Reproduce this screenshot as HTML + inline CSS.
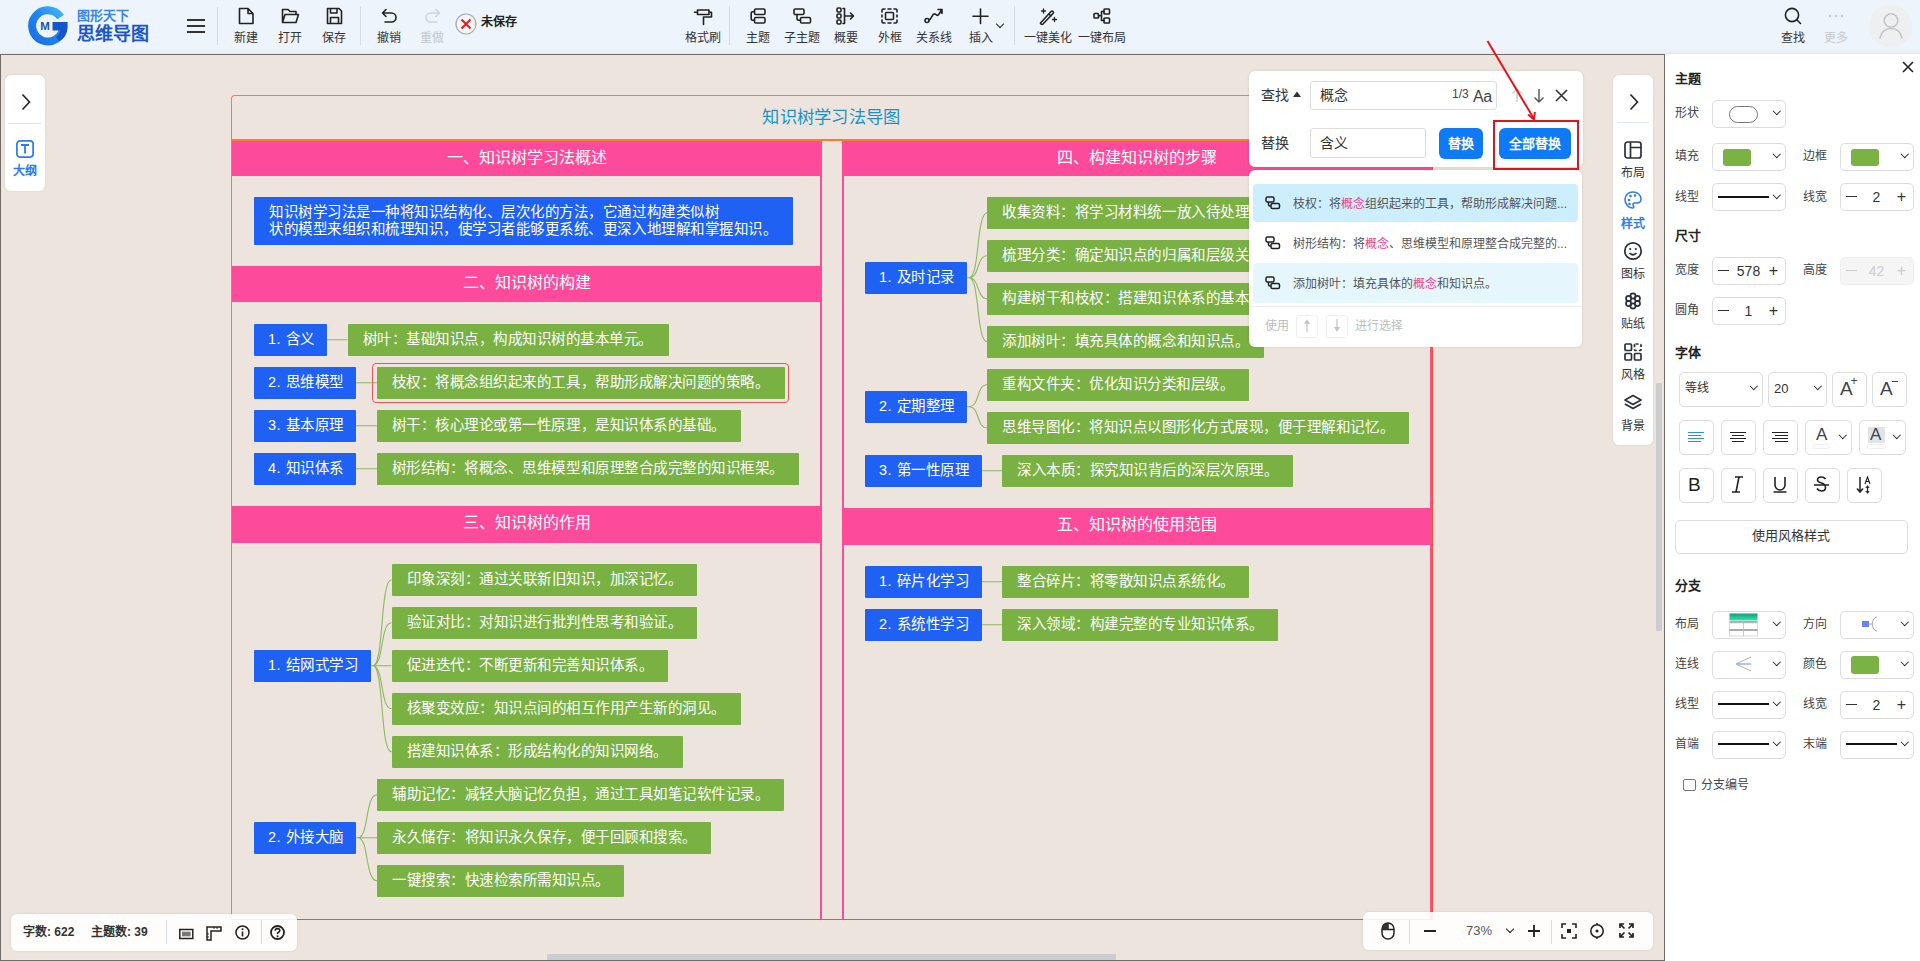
<!DOCTYPE html><html lang="zh-CN"><head><meta charset="utf-8"><style>
*{box-sizing:border-box;margin:0;padding:0}
html,body{width:1920px;height:961px;overflow:hidden;font-family:"Liberation Sans",sans-serif;background:#eef4fb;position:relative}
div,span{position:absolute;white-space:nowrap}
svg{position:absolute;overflow:visible}
.hdr{left:0;top:0;width:1920px;height:54px;background:#eef4fb}
.lab{font-size:12px;font-weight:500;color:#333;line-height:14px;text-align:center;width:60px;margin-left:-30px;top:30.5px}
.vsep{width:1px;background:#d5dce5}
.cv{left:0;top:54px;width:1665px;height:907px;background:#ede5dd;border:1px solid #716c67;overflow:hidden}
.sec{height:36px;background:#fd4a9b;color:#fff;font-size:16px;font-weight:500;text-align:center;line-height:34px}
.bn{height:31.5px;font-weight:500;background:#1f61f2;color:#fff;font-size:14.5px;letter-spacing:0.52px;line-height:31.5px;padding-left:14px;border-radius:1px}
.gn{height:31.5px;font-weight:500;background:#79b143;color:#fff;font-size:14.5px;letter-spacing:0.52px;line-height:31.5px;padding-left:15px;border-radius:1px}
.card{background:#fff;border-radius:6px}
.pl{font-size:12px;color:#444;line-height:14px}
.ph{font-size:13px;font-weight:bold;color:#222;line-height:16px}
.bx{border:1px solid #dcdcdc;border-radius:5px;background:#fff}
.chev{width:5.5px;height:5.5px;border-right:1.8px solid #222;border-bottom:1.8px solid #222;transform:rotate(45deg)}
</style></head><body>
<div class="hdr">
<svg style="left:28px;top:6px" width="40" height="40" viewBox="0 0 40 40">
<defs><linearGradient id="lg" x1="1" y1="0" x2="0" y2="1"><stop offset="0" stop-color="#40b8f8"/><stop offset="0.5" stop-color="#1f86ee"/><stop offset="1" stop-color="#1a6ee6"/></linearGradient></defs>
<circle cx="19.5" cy="20" r="11.5" fill="#f3f6fb"/>
<path d="M11 14 H28 M9 20 H30 M11 26 H28 M19.5 9 V31 M14 10 Q10 20 14 30 M25 10 Q29 20 25 30" stroke="#dfe6f0" stroke-width="0.7" fill="none"/>
<path d="M32.6 11 A15.6 15.6 0 1 0 35.3 21" fill="none" stroke="url(#lg)" stroke-width="8"/>
<path d="M24.5 16 H39.6 V21.5 Q39 31 31 35.5 L28 31 Q31.5 28 32 24.5 H24.5 Z" fill="#1556cc"/>
<text x="12.3" y="23.8" font-size="11.5" font-weight="bold" fill="#1a4fb8" font-family="Liberation Sans">M</text>
</svg>
<span style="left:77px;top:7.5px;font-size:13px;line-height:16px;color:#3a86e8;font-weight:bold">图形天下</span>
<span style="left:76.5px;top:22.5px;font-size:18px;line-height:22px;color:#1a56c9;font-weight:900">思维导图</span>
<div style="left:187px;top:19px;width:18px;height:2px;background:#333"></div><div style="left:187px;top:25px;width:18px;height:2px;background:#333"></div><div style="left:187px;top:31px;width:18px;height:2px;background:#333"></div>
<div class="vsep" style="left:217px;top:7px;height:38px"></div>
<span class="lab" style="left:246px;color:#333">新建</span>
<svg style="left:238px;top:7px" width="17" height="18"><path d="M1.5 1.5 H10 L15 6.5 V16.5 H1.5 Z M10 1.5 V6.5 H15" fill="none" stroke="#222" stroke-width="1.6" stroke-linejoin="round" stroke-linecap="round"/></svg>
<span class="lab" style="left:290px;color:#333">打开</span>
<svg style="left:281px;top:8px" width="19" height="16"><path d="M1.5 14.5 V1.5 H7 L9 3.5 H15 V6 M1.5 14.5 L4 6.5 H17.5 L15 14.5 Z" fill="none" stroke="#222" stroke-width="1.6" stroke-linejoin="round" stroke-linecap="round"/></svg>
<span class="lab" style="left:334px;color:#333">保存</span>
<svg style="left:326px;top:7px" width="17" height="18"><path d="M1.5 1.5 H13 L15.5 4 V16.5 H1.5 Z M4.5 1.5 V6 H11 V1.5 M4.5 16.5 V10.5 H12.5 V16.5" fill="none" stroke="#222" stroke-width="1.6" stroke-linejoin="round" stroke-linecap="round"/></svg>
<div class="vsep" style="left:360px;top:6px;height:39px"></div>
<span class="lab" style="left:389px;color:#333">撤销</span>
<svg style="left:381px;top:8px" width="17" height="15"><path d="M5 1.5 L1.5 5 L5 8.5 M1.5 5 H10.5 A4.5 4.5 0 0 1 10.5 14 H4" fill="none" stroke="#222" stroke-width="1.6" stroke-linejoin="round" stroke-linecap="round"/></svg>
<span class="lab" style="left:432px;color:#c3c7cc">重做</span>
<svg style="left:424px;top:8px" width="17" height="15"><path d="M12 1.5 L15.5 5 L12 8.5 M15.5 5 H6.5 A4.5 4.5 0 0 0 6.5 14 H13" fill="none" stroke="#cfd3d8" stroke-width="1.6" stroke-linejoin="round" stroke-linecap="round"/></svg>
<svg style="left:455px;top:13px" width="22" height="22"><circle cx="11" cy="11" r="10" fill="#f6f6f6" stroke="#a9a9a9" stroke-width="1.2"/><path d="M6.5 6.5 L15.5 15.5 M15.5 6.5 L6.5 15.5" stroke="#e8141c" stroke-width="1.8"/></svg>
<span style="left:481px;top:15px;font-size:12px;line-height:14px;color:#222;font-weight:bold">未保存</span>
<span class="lab" style="left:703px;color:#333">格式刷</span>
<svg style="left:693px;top:8px" width="21" height="18"><path d="M4.5 2 H16 V6.5 H4.5 Z M4.5 4.2 H1.5 M16 4.2 H18.5 V9 H10.5 V12.5 M10.5 12 V16.5" fill="none" stroke="#222" stroke-width="1.6" stroke-linejoin="round" stroke-linecap="round"/></svg>
<div class="vsep" style="left:729px;top:6px;height:39px"></div>
<span class="lab" style="left:758px;color:#333">主题</span>
<svg style="left:750px;top:8px" width="16" height="16"><rect x="4.5" y="1" width="10.5" height="5.5" rx="1.3" fill="none" stroke="#222" stroke-width="1.6" stroke-linejoin="round" stroke-linecap="round"/><rect x="4.5" y="9.5" width="10.5" height="5.5" rx="1.3" fill="none" stroke="#222" stroke-width="1.6" stroke-linejoin="round" stroke-linecap="round"/><path d="M4.5 3.8 H2.5 Q1.2 3.8 1.2 5 V11 Q1.2 12.2 2.5 12.2 H4.5" fill="none" stroke="#222" stroke-width="1.6" stroke-linejoin="round" stroke-linecap="round"/></svg>
<span class="lab" style="left:802px;color:#333">子主题</span>
<svg style="left:793px;top:8px" width="19" height="16"><rect x="1" y="1" width="10" height="5.5" rx="1.3" fill="none" stroke="#222" stroke-width="1.6" stroke-linejoin="round" stroke-linecap="round"/><rect x="7.5" y="9.5" width="10" height="5.5" rx="1.3" fill="none" stroke="#222" stroke-width="1.6" stroke-linejoin="round" stroke-linecap="round"/><path d="M4 6.5 V10.5 Q4 12.2 5.5 12.2 H7.5" fill="none" stroke="#222" stroke-width="1.6" stroke-linejoin="round" stroke-linecap="round"/></svg>
<span class="lab" style="left:846px;color:#333">概要</span>
<svg style="left:836px;top:7px" width="19" height="18"><rect x="1" y="1" width="4" height="4" rx="1.2" fill="none" stroke="#222" stroke-width="1.6" stroke-linejoin="round" stroke-linecap="round"/><rect x="1" y="7" width="4" height="4" rx="1.2" fill="none" stroke="#222" stroke-width="1.6" stroke-linejoin="round" stroke-linecap="round"/><rect x="1" y="13" width="4" height="4" rx="1.2" fill="none" stroke="#222" stroke-width="1.6" stroke-linejoin="round" stroke-linecap="round"/><path d="M7 1.5 H8.5 V16.5 H7 M8.5 9 H17.5 M14.5 6 L17.5 9 L14.5 12" fill="none" stroke="#222" stroke-width="1.6" stroke-linejoin="round" stroke-linecap="round"/></svg>
<span class="lab" style="left:890px;color:#333">外框</span>
<svg style="left:881px;top:8px" width="17" height="16"><path d="M1 4 V2.2 Q1 1 2.2 1 H4 M7 1 H10 M13 1 H14.8 Q16 1 16 2.2 V4 M16 7 V9 M16 12 V13.8 Q16 15 14.8 15 H13 M10 15 H7 M4 15 H2.2 Q1 15 1 13.8 V12 M1 9 V7" fill="none" stroke="#222" stroke-width="1.6" stroke-linejoin="round" stroke-linecap="round"/><rect x="4.5" y="4.5" width="8" height="7" rx="1" fill="none" stroke="#222" stroke-width="1.6" stroke-linejoin="round" stroke-linecap="round"/></svg>
<span class="lab" style="left:934px;color:#333">关系线</span>
<svg style="left:924px;top:8px" width="20" height="16"><circle cx="3" cy="12.5" r="2" fill="none" stroke="#222" stroke-width="1.6" stroke-linejoin="round" stroke-linecap="round"/><path d="M5 12 C8 11, 8 5, 11 6 C13 6.8, 13 9, 15 6 L18 1.5 M14 1.5 H18 V5.5" fill="none" stroke="#222" stroke-width="1.6" stroke-linejoin="round" stroke-linecap="round"/></svg>
<span class="lab" style="left:981px;color:#333">插入</span>
<svg style="left:972px;top:8px" width="17" height="16"><path d="M8.5 1 V15.5 M1 8.2 H16" fill="none" stroke="#222" stroke-width="1.6" stroke-linejoin="round" stroke-linecap="round"/></svg>
<div class="chev" style="left:997px;top:21px;width:6px;height:6px;border-width:0 1.5px 1.5px 0"></div>
<div class="vsep" style="left:1014px;top:6px;height:39px"></div>
<span class="lab" style="left:1048px;color:#333">一键美化</span>
<svg style="left:1039px;top:8px" width="19" height="17"><path d="M2 14.5 L12 3.5 Q13 2.5 14 3.5 Q15 4.5 14 5.5 L4 16 Q3 17 2 16 Q1 15 2 14.5 Z M10 6 L12 8" fill="none" stroke="#222" stroke-width="1.6" stroke-linejoin="round" stroke-linecap="round"/><path d="M4.5 1 V5 M2.5 3 H6.5 M15.5 9.5 V13.5 M13.5 11.5 H17.5" stroke="#222" stroke-width="1.3" stroke-linecap="round"/></svg>
<span class="lab" style="left:1102px;color:#333">一键布局</span>
<svg style="left:1093px;top:8px" width="18" height="16"><rect x="1" y="5.5" width="4.5" height="4.5" rx="0.8" fill="none" stroke="#222" stroke-width="1.6" stroke-linejoin="round" stroke-linecap="round"/><rect x="11" y="1" width="5.5" height="5" rx="0.8" fill="none" stroke="#222" stroke-width="1.6" stroke-linejoin="round" stroke-linecap="round"/><rect x="11" y="10" width="5.5" height="5" rx="0.8" fill="none" stroke="#222" stroke-width="1.6" stroke-linejoin="round" stroke-linecap="round"/><path d="M5.5 7.8 H8 M11 3.5 H8.5 V12.5 H11" fill="none" stroke="#222" stroke-width="1.6" stroke-linejoin="round" stroke-linecap="round"/></svg>
<span class="lab" style="left:1793px;color:#333">查找</span>
<svg style="left:1784px;top:7px" width="18" height="18"><circle cx="8" cy="8" r="6.6" fill="none" stroke="#222" stroke-width="1.6" stroke-linejoin="round" stroke-linecap="round"/><path d="M12.8 12.8 L16.5 16.5" fill="none" stroke="#222" stroke-width="1.6" stroke-linejoin="round" stroke-linecap="round"/></svg>
<span class="lab" style="left:1836px;color:#c5c9ce">更多</span>
<svg style="left:1828px;top:14px" width="16" height="4"><circle cx="2" cy="2" r="1.3" fill="#cdd1d6"/><circle cx="8" cy="2" r="1.3" fill="#cdd1d6"/><circle cx="14" cy="2" r="1.3" fill="#cdd1d6"/></svg>
<svg style="left:1869px;top:4px" width="44" height="44"><circle cx="22" cy="22" r="21.5" fill="#edeff1"/><circle cx="22" cy="16.5" r="6.8" fill="none" stroke="#c4c4c4" stroke-width="1.6"/><path d="M11 34 Q13 24.5 22 24.5 Q31 24.5 33 34" fill="none" stroke="#c4c4c4" stroke-width="1.6" stroke-linecap="round"/></svg>
<div style="left:0;top:48px;width:1920px;height:6px;background:linear-gradient(rgba(0,0,0,0),rgba(0,0,0,.035))"></div>
</div>
<div style="left:1665px;top:51px;width:255px;height:3px;background:linear-gradient(#eef2f7,#e3e5e8)"></div>
<div class="cv">
<div class="card" style="left:4px;top:20px;width:40px;height:116px;border-radius:6px;box-shadow:0 0 2px rgba(0,0,0,.12)"></div>
<svg style="left:20px;top:38px" width="10" height="18"><path d="M1.5 1.5 L8.5 9 L1.5 16.5" fill="none" stroke="#222" stroke-width="1.6"/></svg>
<div style="left:7px;top:68px;width:33px;height:1px;background:#dde6ee"></div>
<svg style="left:15px;top:85px" width="18" height="18"><rect x="0.9" y="0.9" width="16.2" height="16.2" rx="3" fill="none" stroke="#2d7bf0" stroke-width="1.7"/><path d="M5 5 H13 M9 5 V13.5" stroke="#2d7bf0" stroke-width="1.8"/></svg>
<span style="left:12px;top:109px;font-size:12px;line-height:15px;color:#2d7bf0;font-weight:bold">大纲</span>
<div style="left:230px;top:40px;width:1202px;height:825px;border:1.5px solid #ff7a35;border-bottom-color:#ff4d2e;border-right-color:#ff4d2e;border-radius:4px 0 0 0"></div>
<div style="left:231px;top:84px;width:1200px;height:2px;background:#ff7a2a"></div>
<span style="left:699px;top:51px;width:263px;text-align:center;font-size:17.3px;font-weight:500;letter-spacing:0.3px;line-height:22px;color:#1993c8">知识树学习法导图</span>
<div style="left:819px;top:86px;width:2px;height:778px;background:#fb4c9c"></div>
<div style="left:841px;top:86px;width:2px;height:778px;background:#fb4c9c"></div>
<div style="left:1429px;top:86px;width:1.5px;height:778px;background:#fb4c9c"></div>
<div class="sec" style="left:231px;top:86px;width:590px;height:35px">一、知识树学习法概述</div>
<div class="sec" style="left:231px;top:211px;width:590px;height:36px">二、知识树的构建</div>
<div class="sec" style="left:231px;top:451px;width:590px;height:36.5px">三、知识树的作用</div>
<div class="sec" style="left:841px;top:86px;width:590px;height:35px">四、构建知识树的步骤</div>
<div class="sec" style="left:841px;top:453px;width:590px;height:36.5px">五、知识树的使用范围</div>
<div style="left:253px;top:142px;width:539px;height:48px;background:#1f61f2;color:#fff;font-size:14.5px;font-weight:500;letter-spacing:0.52px;line-height:16.8px;padding:7px 0 0 15px;border-radius:1px">知识树学习法是一种将知识结构化、层次化的方法，它通过构建类似树<br>状的模型来组织和梳理知识，使学习者能够更系统、更深入地理解和掌握知识。</div>
<div class="bn" style="left:253px;top:269px;width:73px;">1. 含义</div>
<div class="gn" style="left:346.5px;top:269px;width:321px;">树叶：基础知识点，构成知识树的基本单元。</div>
<div class="bn" style="left:253px;top:312px;width:102px;">2. 思维模型</div>
<div class="gn" style="left:375.75px;top:312px;width:408px;">枝权：将概念组织起来的工具，帮助形成解决问题的策略。</div>
<div class="bn" style="left:253px;top:355px;width:102px;">3. 基本原理</div>
<div class="gn" style="left:375.75px;top:355px;width:364px;">树干：核心理论或第一性原理，是知识体系的基础。</div>
<div class="bn" style="left:253px;top:398px;width:102px;">4. 知识体系</div>
<div class="gn" style="left:375.75px;top:398px;width:422px;">树形结构：将概念、思维模型和原理整合成完整的知识框架。</div>
<div class="bn" style="left:253px;top:595px;width:117px;">1. 结网式学习</div>
<div class="gn" style="left:390.5px;top:509px;width:305px;">印象深刻：通过关联新旧知识，加深记忆。</div>
<div class="gn" style="left:390.5px;top:552px;width:305px;">验证对比：对知识进行批判性思考和验证。</div>
<div class="gn" style="left:390.5px;top:595px;width:276px;">促进迭代：不断更新和完善知识体系。</div>
<div class="gn" style="left:390.5px;top:638px;width:349px;">核聚变效应：知识点间的相互作用产生新的洞见。</div>
<div class="gn" style="left:390.5px;top:681px;width:291px;">搭建知识体系：形成结构化的知识网络。</div>
<div class="bn" style="left:253px;top:767px;width:102px;">2. 外接大脑</div>
<div class="gn" style="left:376px;top:724px;width:407px;">辅助记忆：减轻大脑记忆负担，通过工具如笔记软件记录。</div>
<div class="gn" style="left:376px;top:767px;width:334px;">永久储存：将知识永久保存，便于回顾和搜索。</div>
<div class="gn" style="left:376px;top:810px;width:247px;">一键搜索：快速检索所需知识点。</div>
<div class="bn" style="left:864px;top:207px;width:102px;">1. 及时记录</div>
<div class="gn" style="left:986.3px;top:142px;width:330px;">收集资料：将学习材料统一放入待处理文件夹。</div>
<div class="gn" style="left:986.3px;top:185px;width:330px;">梳理分类：确定知识点的归属和层级关系。</div>
<div class="gn" style="left:986.3px;top:228px;width:330px;">构建树干和枝权：搭建知识体系的基本框架。</div>
<div class="gn" style="left:986.3px;top:271px;width:277px;">添加树叶：填充具体的概念和知识点。</div>
<div class="bn" style="left:864px;top:336px;width:102px;">2. 定期整理</div>
<div class="gn" style="left:986px;top:314px;width:262px;">重构文件夹：优化知识分类和层级。</div>
<div class="gn" style="left:986px;top:357px;width:422px;">思维导图化：将知识点以图形化方式展现，便于理解和记忆。</div>
<div class="bn" style="left:864px;top:400px;width:117px;">3. 第一性原理</div>
<div class="gn" style="left:1001px;top:400px;width:291px;">深入本质：探究知识背后的深层次原理。</div>
<div class="bn" style="left:864px;top:511px;width:117px;">1. 碎片化学习</div>
<div class="gn" style="left:1001px;top:511px;width:247px;">整合碎片：将零散知识点系统化。</div>
<div class="bn" style="left:864px;top:554px;width:117px;">2. 系统性学习</div>
<div class="gn" style="left:1001px;top:554px;width:276px;">深入领域：构建完整的专业知识体系。</div>
<svg style="left:-1px;top:-55px" width="1920" height="961"><path d="M327 339.75 H347.5 M356 382.75 H376.75 M356 425.75 H376.75 M356 468.75 H376.75 M371 665.75 H373 C384 665.75 380 579.75 391.5 579.75 M371 665.75 H373 C384 665.75 380 622.75 391.5 622.75 M371 665.75 H391.5 M371 665.75 H373 C384 665.75 380 708.75 391.5 708.75 M371 665.75 H373 C384 665.75 380 751.75 391.5 751.75 M356 837.75 H358 C369 837.75 365 794.75 377 794.75 M356 837.75 H377 M356 837.75 H358 C369 837.75 365 880.75 377 880.75 M967 277.75 H969 C980 277.75 976 212.75 987.3 212.75 M967 277.75 H969 C980 277.75 976 255.75 987.3 255.75 M967 277.75 H969 C980 277.75 976 298.75 987.3 298.75 M967 277.75 H969 C980 277.75 976 341.75 987.3 341.75 M967 406.75 H969 C980 406.75 976 384.75 987 384.75 M967 406.75 H969 C980 406.75 976 427.75 987 427.75 M982 470.75 H1002 M982 581.75 H1002 M982 624.75 H1002" fill="none" stroke="#8cb862" stroke-width="1.1"/></svg>
<div style="left:371px;top:307.5px;width:417px;height:40.5px;border:1.6px solid #f0535a;border-radius:4px"></div>
<div style="left:10px;top:858.5px;width:286px;height:37px;background:rgba(255,255,255,.9);border-radius:6px;box-shadow:0 0 2px rgba(0,0,0,.15)"></div>
<span style="left:22px;top:870px;font-size:12px;line-height:15px;color:#333;font-weight:bold">字数: 622</span>
<span style="left:90px;top:870px;font-size:12px;line-height:15px;color:#333;font-weight:bold">主题数: 39</span>
<div style="left:165px;top:865px;width:1px;height:24px;background:#d3dbe4"></div>
<div style="left:260px;top:865px;width:1px;height:24px;background:#d3dbe4"></div>
<svg style="left:178px;top:872.5px" width="15" height="12"><rect x="0.8" y="1.5" width="13" height="9" fill="none" stroke="#222" stroke-width="1.5"/><rect x="3" y="3.7" width="8.6" height="4.6" fill="#777"/></svg>
<svg style="left:205px;top:870.5px" width="16" height="15"><path d="M1 1 H15 V5 H5 V14 H1 Z" fill="none" stroke="#222" stroke-width="1.5"/><path d="M1 8 H3 M1 11 H3 M8 1 V3 M11 1 V3" stroke="#222" stroke-width="1"/></svg>
<svg style="left:234px;top:870px" width="15" height="15"><circle cx="7.5" cy="7.5" r="6.5" fill="none" stroke="#222" stroke-width="1.5"/><path d="M7.5 6.5 V11.5" stroke="#222" stroke-width="1.6"/><circle cx="7.5" cy="4.2" r="1" fill="#222"/></svg>
<svg style="left:269px;top:870px" width="15" height="15"><circle cx="7.5" cy="7.5" r="6.5" fill="none" stroke="#222" stroke-width="1.8"/><path d="M5.2 5.8 Q5.2 3.6 7.5 3.6 Q9.8 3.6 9.8 5.6 Q9.8 7 7.6 8 V9" fill="none" stroke="#222" stroke-width="1.6"/><circle cx="7.6" cy="11.2" r="1" fill="#222"/></svg>
<div style="left:1362px;top:857px;width:290px;height:38px;background:rgba(255,255,255,.9);border-radius:6px;box-shadow:0 0 2px rgba(0,0,0,.15)"></div>
<svg style="left:1380px;top:867px" width="14" height="18"><path d="M7 1 A6 6 0 0 1 13 7 V11 A6 6 0 0 1 1 11 V7 A6 6 0 0 1 7 1 Z M1 7.5 H13 M7 1 V7.5" fill="none" stroke="#222" stroke-width="1.5"/><path d="M7 1 A6 6 0 0 0 1 7 V7.5 H7 Z" fill="#333"/></svg>
<div style="left:1407.5px;top:865px;width:1px;height:24px;background:#d3dbe4"></div>
<div style="left:1549.5px;top:865px;width:1px;height:24px;background:#d3dbe4"></div>
<div style="left:1423px;top:875px;width:12px;height:2px;background:#222"></div>
<span style="left:1465px;top:868px;font-size:13px;line-height:16px;color:#555">73%</span>
<div class="chev" style="left:1506px;top:871px;width:6px;height:6px;border-width:0 1.5px 1.5px 0"></div>
<svg style="left:1526px;top:869px" width="14" height="14"><path d="M7 1 V13 M1 7 H13" stroke="#222" stroke-width="1.8"/></svg>
<svg style="left:1560px;top:868px" width="16" height="16"><path d="M1 5 V1 H5 M11 1 H15 V5 M15 11 V15 H11 M5 15 H1 V11" fill="none" stroke="#222" stroke-width="1.6"/><rect x="6" y="6" width="4" height="4" fill="#222"/></svg>
<svg style="left:1588px;top:868px" width="16" height="16"><circle cx="8" cy="8" r="6.2" fill="none" stroke="#222" stroke-width="1.5"/><circle cx="8" cy="8" r="1.5" fill="#222"/><path d="M8 0 V2 M8 14 V16" stroke="#222" stroke-width="1.5"/></svg>
<svg style="left:1618px;top:868px" width="15" height="15"><path d="M1 5 V1 H5 M1 1 L5.5 5.5 M10 1 H14 V5 M14 1 L9.5 5.5 M14 10 V14 H10 M14 14 L9.5 9.5 M5 14 H1 V10 M1 14 L5.5 9.5" fill="none" stroke="#222" stroke-width="1.7"/></svg>
<div class="card" style="left:1612px;top:20px;width:40px;height:370px;box-shadow:0 0 2px rgba(0,0,0,.12)"></div>
<svg style="left:1628px;top:38px" width="10" height="18"><path d="M1.5 1.5 L8.5 9 L1.5 16.5" fill="none" stroke="#222" stroke-width="1.6"/></svg>
<div style="left:1616px;top:67px;width:32px;height:1px;background:#dde6ee"></div>
<span style="left:1612px;top:110.5px;width:40px;text-align:center;font-size:12px;line-height:14px;color:#333;">布局</span>
<svg style="left:1622px;top:84.5px" width="20" height="20"><rect x="2" y="2" width="16" height="16" rx="2.5" fill="none" stroke="#2a2f3a" stroke-width="1.7" stroke-linejoin="round"/><path d="M7.5 2 V18 M7.5 7.5 H18" fill="none" stroke="#2a2f3a" stroke-width="1.7" stroke-linejoin="round"/></svg>
<span style="left:1612px;top:161.5px;width:40px;text-align:center;font-size:12px;line-height:14px;color:#2f7cf2;font-weight:bold;">样式</span>
<svg style="left:1622px;top:134.5px" width="20" height="20"><path d="M10 2 C5 2 2 5.5 2 9.5 C2 14 5.5 18 9.5 18 C11 18 11 16.8 10.3 15.8 C9.5 14.6 10.2 13 11.8 13 H14 C16.5 13 18 11.5 18 9 C18 5 14.5 2 10 2 Z" fill="none" stroke="#2f7cf2" stroke-width="1.6"/><circle cx="6" cy="10" r="1.3" fill="#2f7cf2"/><circle cx="7.5" cy="6" r="1.3" fill="#2f7cf2"/><circle cx="12" cy="5.5" r="1.3" fill="#2f7cf2"/><circle cx="6.5" cy="14" r="1.3" fill="#2f7cf2"/></svg>
<span style="left:1612px;top:211.5px;width:40px;text-align:center;font-size:12px;line-height:14px;color:#333;">图标</span>
<svg style="left:1622px;top:185.5px" width="20" height="20"><circle cx="10" cy="10" r="8.2" fill="none" stroke="#2a2f3a" stroke-width="1.7" stroke-linejoin="round"/><circle cx="7.2" cy="8" r="1.1" fill="#2a2f3a"/><circle cx="12.8" cy="8" r="1.1" fill="#2a2f3a"/><path d="M6.5 12 Q10 15.5 13.5 12" fill="none" stroke="#2a2f3a" stroke-width="1.7" stroke-linejoin="round"/></svg>
<span style="left:1612px;top:261.5px;width:40px;text-align:center;font-size:12px;line-height:14px;color:#333;">贴纸</span>
<svg style="left:1622px;top:235.5px" width="20" height="20"><circle cx="10" cy="5" r="2.6" fill="none" stroke="#2a2f3a" stroke-width="1.7" stroke-linejoin="round"/><circle cx="10" cy="15" r="2.6" fill="none" stroke="#2a2f3a" stroke-width="1.7" stroke-linejoin="round"/><circle cx="5.6" cy="7.5" r="2.6" fill="none" stroke="#2a2f3a" stroke-width="1.7" stroke-linejoin="round"/><circle cx="14.4" cy="7.5" r="2.6" fill="none" stroke="#2a2f3a" stroke-width="1.7" stroke-linejoin="round"/><circle cx="5.6" cy="12.5" r="2.6" fill="none" stroke="#2a2f3a" stroke-width="1.7" stroke-linejoin="round"/><circle cx="14.4" cy="12.5" r="2.6" fill="none" stroke="#2a2f3a" stroke-width="1.7" stroke-linejoin="round"/></svg>
<span style="left:1612px;top:312.5px;width:40px;text-align:center;font-size:12px;line-height:14px;color:#333;">风格</span>
<svg style="left:1622px;top:286.5px" width="20" height="20"><rect x="2" y="2" width="6.5" height="6.5" rx="1" fill="none" stroke="#2a2f3a" stroke-width="1.7" stroke-linejoin="round"/><rect x="11.5" y="2" width="6.5" height="6.5" rx="1" stroke-dasharray="3 2" fill="none" stroke="#2a2f3a" stroke-width="1.7" stroke-linejoin="round"/><rect x="2" y="11.5" width="6.5" height="6.5" rx="1" fill="none" stroke="#2a2f3a" stroke-width="1.7" stroke-linejoin="round"/><rect x="11.5" y="11.5" width="6.5" height="6.5" rx="1" fill="none" stroke="#2a2f3a" stroke-width="1.7" stroke-linejoin="round"/></svg>
<span style="left:1612px;top:363.5px;width:40px;text-align:center;font-size:12px;line-height:14px;color:#333;">背景</span>
<svg style="left:1622px;top:337.5px" width="20" height="20"><path d="M10 2.5 L18 7 L10 11.5 L2 7 Z M2 11 L10 15.5 L18 11" fill="none" stroke="#2a2f3a" stroke-width="1.7" stroke-linejoin="round"/></svg>
<div style="left:1655px;top:328px;width:5.5px;height:248px;background:#cbcdd1;border-radius:1px"></div>
<div style="left:546px;top:899px;width:569px;height:6px;background:#cbcdd1;border-radius:1px"></div>
</div>
<div class="card" style="left:1248.5px;top:70.5px;width:334px;height:96.5px;box-shadow:0 0 3px rgba(0,0,0,.12)"></div>
<span style="left:1261px;top:87px;font-size:14px;line-height:17px;color:#333">查找</span>
<svg style="left:1293px;top:91px" width="8" height="6"><path d="M0 6 L4 0.5 L8 6 Z" fill="#333"/></svg>
<div class="bx" style="left:1310px;top:80.5px;width:187px;height:29px;border-radius:3px"></div>
<span style="left:1320px;top:87px;font-size:14px;line-height:17px;color:#333">概念</span>
<span style="left:1452px;top:87px;font-size:12px;line-height:14px;color:#444">1/3</span>
<span style="left:1473px;top:88px;font-size:16px;line-height:17px;color:#444;letter-spacing:-0.5px">Aa</span>
<svg style="left:1511px;top:88px" width="12" height="15"><path d="M6 1 V14 M1.5 5.5 L6 1 L10.5 5.5" fill="none" stroke="#c8c8c8" stroke-width="1.4"/></svg>
<svg style="left:1533px;top:88px" width="12" height="15"><path d="M6 1 V14 M1.5 9.5 L6 14 L10.5 9.5" fill="none" stroke="#555" stroke-width="1.4"/></svg>
<svg style="left:1555px;top:89px" width="13" height="13"><path d="M1 1 L12 12 M12 1 L1 12" fill="none" stroke="#333" stroke-width="1.6"/></svg>
<span style="left:1261px;top:135px;font-size:14px;line-height:17px;color:#333">替换</span>
<div class="bx" style="left:1310px;top:128px;width:116px;height:29.5px;border-radius:3px"></div>
<span style="left:1320px;top:135px;font-size:14px;line-height:17px;color:#333">含义</span>
<div style="left:1439px;top:127.5px;width:44px;height:31px;background:#0e7af5;border-radius:6px;color:#fff;font-size:13px;line-height:31px;text-align:center;font-weight:bold">替换</div>
<div style="left:1499px;top:127.5px;width:72px;height:31px;background:#0e7af5;border-radius:6px;color:#fff;font-size:13px;line-height:31px;text-align:center;font-weight:bold">全部替换</div>
<div class="card" style="left:1249px;top:170px;width:333px;height:177px;box-shadow:0 0 3px rgba(0,0,0,.12)"></div>
<div style="left:1253px;top:184px;width:325px;height:38px;background:#cdeefc;border-radius:4px"></div>
<div style="left:1253px;top:263px;width:325px;height:40px;background:#e6f6fd;border-radius:4px"></div>
<div style="left:1249px;top:305.5px;width:333px;height:1px;background:#ececec"></div>
<svg style="left:1265px;top:196px" width="16" height="14"><rect x="1" y="1" width="8" height="5" rx="1.5" fill="none" stroke="#222" stroke-width="1.5"/><rect x="6" y="7.5" width="8.5" height="5" rx="1.5" fill="none" stroke="#222" stroke-width="1.5"/><path d="M3.5 6 V8.5 Q3.5 10 5 10 H6" fill="none" stroke="#222" stroke-width="1.5"/></svg>
<span style="left:1293px;top:196px;font-size:12px;line-height:16px;color:#555">枝权：将<span style="position:static;color:#f2428a">概念</span>组织起来的工具，帮助形成解决问题...</span>
<svg style="left:1265px;top:236px" width="16" height="14"><rect x="1" y="1" width="8" height="5" rx="1.5" fill="none" stroke="#222" stroke-width="1.5"/><rect x="6" y="7.5" width="8.5" height="5" rx="1.5" fill="none" stroke="#222" stroke-width="1.5"/><path d="M3.5 6 V8.5 Q3.5 10 5 10 H6" fill="none" stroke="#222" stroke-width="1.5"/></svg>
<span style="left:1293px;top:236px;font-size:12px;line-height:16px;color:#555">树形结构：将<span style="position:static;color:#f2428a">概念</span>、思维模型和原理整合成完整的...</span>
<svg style="left:1265px;top:276px" width="16" height="14"><rect x="1" y="1" width="8" height="5" rx="1.5" fill="none" stroke="#222" stroke-width="1.5"/><rect x="6" y="7.5" width="8.5" height="5" rx="1.5" fill="none" stroke="#222" stroke-width="1.5"/><path d="M3.5 6 V8.5 Q3.5 10 5 10 H6" fill="none" stroke="#222" stroke-width="1.5"/></svg>
<span style="left:1293px;top:276px;font-size:12px;line-height:16px;color:#555">添加树叶：填充具体的<span style="position:static;color:#f2428a">概念</span>和知识点。</span>
<span style="left:1265px;top:319px;font-size:12px;line-height:15px;color:#bdbdbd">使用</span>
<div style="left:1296px;top:315px;width:22px;height:23px;border:1px solid #efefef;border-radius:3px"></div>
<div style="left:1326px;top:315px;width:22px;height:23px;border:1px solid #efefef;border-radius:3px"></div>
<svg style="left:1302px;top:318px" width="10" height="15"><path d="M5 4 V14" stroke="#c5c5c5" stroke-width="1.3"/><path d="M2 6 L5 1 L8 6 Z" fill="#c5c5c5"/></svg>
<svg style="left:1332px;top:318px" width="10" height="15"><path d="M5 1 V11" stroke="#c5c5c5" stroke-width="1.3"/><path d="M2 9 L5 14 L8 9 Z" fill="#c5c5c5"/></svg>
<span style="left:1355px;top:319px;font-size:12px;line-height:15px;color:#bdbdbd">进行选择</span>
<div style="left:1492.5px;top:119.5px;width:86px;height:50px;border:2px solid #e3131b"></div>
<svg style="left:0;top:0" width="1920" height="961"><path d="M1487.5 41 L1533.5 118" stroke="#e8141c" stroke-width="2"/><path d="M1528 114.5 L1534 119.5 L1534.8 112" fill="none" stroke="#e8141c" stroke-width="2"/></svg>
<div style="left:1665px;top:54px;width:255px;height:907px;background:#fff"></div>
<svg style="left:1902px;top:61px" width="12" height="12"><path d="M1 1 L11 11 M11 1 L1 11" stroke="#222" stroke-width="1.6"/></svg>
<span class="ph" style="left:1675px;top:71px">主题</span>
<span class="pl" style="left:1675px;top:106px;color:#444">形状</span>
<div class="bx" style="left:1711.5px;top:99.5px;width:74px;height:28px;"></div>
<div class="chev" style="left:1774px;top:108px"></div>
<div style="left:1729px;top:105.5px;width:29px;height:17px;border:1.3px solid #777;border-radius:9px"></div>
<span class="pl" style="left:1675px;top:149px;color:#444">填充</span>
<div class="bx" style="left:1711.5px;top:142.5px;width:74px;height:28px;"></div>
<div class="chev" style="left:1774px;top:151px"></div>
<div style="left:1723px;top:148.5px;width:28px;height:17.5px;background:#7ab344;border-radius:3px"></div>
<span class="pl" style="left:1803px;top:149px;color:#444">边框</span>
<div class="bx" style="left:1839.5px;top:142.5px;width:74.5px;height:28px;"></div>
<div class="chev" style="left:1902px;top:151px"></div>
<div style="left:1851px;top:148.5px;width:28px;height:17.5px;background:#7ab344;border-radius:3px"></div>
<span class="pl" style="left:1675px;top:190px;color:#444">线型</span>
<div class="bx" style="left:1711.5px;top:182.5px;width:74px;height:28px;"></div>
<div class="chev" style="left:1774px;top:192px"></div>
<div style="left:1718px;top:196px;width:51px;height:2px;background:#111"></div>
<span class="pl" style="left:1803px;top:190px;color:#444">线宽</span>
<div class="bx" style="left:1839.5px;top:182.5px;width:74.5px;height:28px;"></div>
<div style="left:1845.5px;top:196.0px;width:11px;height:1.4px;background:#333"></div>
<span style="left:1856.5px;top:188.5px;width:40px;text-align:center;font-size:14px;line-height:16px;color:#333">2</span>
<span style="left:1894.5px;top:187.5px;width:14px;text-align:center;font-size:16px;line-height:17px;color:#333">+</span>
<span class="ph" style="left:1675px;top:228px">尺寸</span>
<span class="pl" style="left:1675px;top:263px;color:#444">宽度</span>
<div class="bx" style="left:1711.5px;top:256.5px;width:74.5px;height:28px;"></div>
<div style="left:1717.5px;top:270.0px;width:11px;height:1.4px;background:#333"></div>
<span style="left:1728.5px;top:262.5px;width:40px;text-align:center;font-size:14px;line-height:16px;color:#333">578</span>
<span style="left:1766.5px;top:261.5px;width:14px;text-align:center;font-size:16px;line-height:17px;color:#333">+</span>
<span class="pl" style="left:1803px;top:263px;color:#444">高度</span>
<div class="bx" style="left:1839.5px;top:256.5px;width:74.5px;height:28px;background:#f5f5f5;border-color:#eee;"></div>
<div style="left:1845.5px;top:270.0px;width:11px;height:1.4px;background:#ccc"></div>
<span style="left:1856.5px;top:262.5px;width:40px;text-align:center;font-size:14px;line-height:16px;color:#ccc">42</span>
<span style="left:1894.5px;top:261.5px;width:14px;text-align:center;font-size:16px;line-height:17px;color:#ccc">+</span>
<span class="pl" style="left:1675px;top:303px;color:#444">圆角</span>
<div class="bx" style="left:1711.5px;top:296.5px;width:74.5px;height:28px;"></div>
<div style="left:1717.5px;top:310.0px;width:11px;height:1.4px;background:#333"></div>
<span style="left:1728.5px;top:302.5px;width:40px;text-align:center;font-size:14px;line-height:16px;color:#333">1</span>
<span style="left:1766.5px;top:301.5px;width:14px;text-align:center;font-size:16px;line-height:17px;color:#333">+</span>
<span class="ph" style="left:1675px;top:345px">字体</span>
<div class="bx" style="left:1678.5px;top:371.5px;width:84px;height:35px;"></div>
<span class="pl" style="left:1685px;top:381px;color:#333">等线</span>
<div class="chev" style="left:1751px;top:383px"></div>
<div class="bx" style="left:1767.5px;top:371.5px;width:59px;height:35px;"></div>
<span style="left:1774px;top:381px;font-size:13px;line-height:15px;color:#333">20</span>
<div class="chev" style="left:1815px;top:383px"></div>
<div class="bx" style="left:1831.5px;top:371.5px;width:35px;height:35px;"></div>
<div class="bx" style="left:1871.5px;top:371.5px;width:35px;height:35px;"></div>
<span style="left:1840px;top:378px;font-size:19px;line-height:21px;color:#3c4250">A</span><span style="left:1850.5px;top:375px;font-size:12px;line-height:12px;color:#3c4250">+</span>
<span style="left:1880px;top:378px;font-size:19px;line-height:21px;color:#3c4250">A</span><div style="left:1892px;top:380.5px;width:6px;height:1.3px;background:#3c4250"></div>
<div class="bx" style="left:1678.5px;top:419.5px;width:35px;height:35px;"></div>
<div class="bx" style="left:1720.5px;top:419.5px;width:35px;height:35px;"></div>
<div class="bx" style="left:1762.5px;top:419.5px;width:35px;height:35px;"></div>
<div class="bx" style="left:1804.5px;top:419.5px;width:47px;height:35px;"></div>
<div class="bx" style="left:1858.5px;top:419.5px;width:47px;height:35px;"></div>
<div style="left:1688px;top:431.5px;width:16px;height:1.3px;background:#2f8cf5"></div>
<div style="left:1688px;top:434.7px;width:13px;height:1.3px;background:#2f8cf5"></div>
<div style="left:1688px;top:437.9px;width:16px;height:1.3px;background:#2f8cf5"></div>
<div style="left:1688px;top:441.1px;width:13px;height:1.3px;background:#2f8cf5"></div>
<div style="left:1730px;top:431.5px;width:16px;height:1.3px;background:#222"></div>
<div style="left:1732px;top:434.7px;width:12px;height:1.3px;background:#222"></div>
<div style="left:1730px;top:437.9px;width:16px;height:1.3px;background:#222"></div>
<div style="left:1732px;top:441.1px;width:12px;height:1.3px;background:#222"></div>
<div style="left:1772px;top:431.5px;width:16px;height:1.3px;background:#222"></div>
<div style="left:1775px;top:434.7px;width:13px;height:1.3px;background:#222"></div>
<div style="left:1772px;top:437.9px;width:16px;height:1.3px;background:#222"></div>
<div style="left:1775px;top:441.1px;width:13px;height:1.3px;background:#222"></div>
<span style="left:1816px;top:426px;font-size:17px;line-height:18px;color:#3c4250">A</span>
<div style="left:1813px;top:444px;width:17px;height:5px;border:1px solid #eee;border-radius:3px"></div>
<div class="chev" style="left:1840px;top:432px"></div>
<div style="left:1868px;top:427px;width:17px;height:16px;background:#e1e3e6"></div><span style="left:1870px;top:426px;font-size:17px;line-height:18px;color:#3c4250">A</span>
<div style="left:1867px;top:444px;width:19px;height:5px;border:1px solid #eee;border-radius:3px"></div>
<div class="chev" style="left:1894px;top:432px"></div>
<div class="bx" style="left:1678.5px;top:467.5px;width:35px;height:35px;"></div>
<div class="bx" style="left:1720.5px;top:467.5px;width:35px;height:35px;"></div>
<div class="bx" style="left:1762.5px;top:467.5px;width:35px;height:35px;"></div>
<div class="bx" style="left:1804.5px;top:467.5px;width:35px;height:35px;"></div>
<div class="bx" style="left:1846.5px;top:467.5px;width:35px;height:35px;"></div>
<span style="left:1688px;top:475px;font-size:19px;line-height:20px;color:#222">B</span>
<svg style="left:1730px;top:476px" width="15" height="18"><path d="M5 1 H13 M2 16 H10 M9 1 L6 16" stroke="#222" stroke-width="1.6" fill="none"/></svg>
<svg style="left:1772px;top:476px" width="16" height="18"><path d="M3 1 V9 A5 5 0 0 0 13 9 V1 M1.5 16 H14.5" stroke="#222" stroke-width="1.6" fill="none"/></svg>
<svg style="left:1813px;top:476px" width="17" height="18"><path d="M12.5 3 Q11 1 8.5 1 Q4.5 1 4.5 4 Q4.5 6 8.5 7 Q12.5 8 12.5 11.5 Q12.5 15 8.5 15 Q5.5 15 4 12.5 M1 9 H16" stroke="#222" stroke-width="1.6" fill="none"/></svg>
<svg style="left:1856px;top:476px" width="17" height="18"><path d="M4 1 V16 M1 12.5 L4 16 L7 12.5" stroke="#222" stroke-width="1.5" fill="none"/><path d="M9 8 L11.5 1 L14 8 M9.8 5.5 H13.2 M11.5 10 V17 M9.8 12 L11.5 10 L13.2 12 M9.8 15 L11.5 17 L13.2 15" stroke="#222" stroke-width="1.1" fill="none"/></svg>
<div class="bx" style="left:1674.5px;top:520px;width:233px;height:33.5px;"></div>
<span style="left:1674.5px;top:528px;width:233px;text-align:center;font-size:13px;line-height:16px;color:#333">使用风格样式</span>
<span class="ph" style="left:1675px;top:578px">分支</span>
<span class="pl" style="left:1675px;top:617px;color:#444">布局</span>
<div class="bx" style="left:1711.5px;top:610.5px;width:74.5px;height:28px;"></div>
<div class="chev" style="left:1774px;top:619px"></div>
<svg style="left:1729px;top:613px" width="29" height="24"><defs><linearGradient id="tg" x1="0" y1="0" x2="0" y2="1"><stop offset="0" stop-color="#0aa37a"/><stop offset="1" stop-color="#3fdcb0"/></linearGradient></defs><rect x="0.5" y="0.5" width="28" height="7" fill="url(#tg)"/><rect x="0.5" y="8" width="28" height="2" fill="#aaa"/><rect x="0.5" y="10" width="28" height="13" fill="none" stroke="#ccc" stroke-width="0.8"/><rect x="0.5" y="16" width="28" height="2" fill="#aaa"/><path d="M14.5 10 V23" stroke="#bbb" stroke-width="0.8"/></svg>
<span class="pl" style="left:1803px;top:617px;color:#444">方向</span>
<div class="bx" style="left:1839.5px;top:610.5px;width:74.5px;height:28px;"></div>
<div class="chev" style="left:1902px;top:619px"></div>
<svg style="left:1862px;top:615px" width="16" height="18"><rect x="0" y="6" width="7" height="6" fill="#6b82f5"/><path d="M7 9 H10 M15 2 Q10.5 3 10.5 9 Q10.5 15 15 16" fill="none" stroke="#a9a9a9" stroke-width="1"/></svg>
<span class="pl" style="left:1675px;top:657px;color:#444">连线</span>
<div class="bx" style="left:1711.5px;top:650.5px;width:74.5px;height:28px;"></div>
<div class="chev" style="left:1774px;top:659px"></div>
<svg style="left:1735px;top:656px" width="17" height="16"><path d="M16 1 L1 8 L16 15" fill="none" stroke="#c4a89c" stroke-width="1"/><path d="M1 8 H16" stroke="#8ab8f0" stroke-width="1.5"/></svg>
<span class="pl" style="left:1803px;top:657px;color:#444">颜色</span>
<div class="bx" style="left:1839.5px;top:650.5px;width:74.5px;height:28px;"></div>
<div class="chev" style="left:1902px;top:659px"></div>
<div style="left:1851px;top:656px;width:28px;height:17.5px;background:#7ab344;border-radius:3px"></div>
<span class="pl" style="left:1675px;top:697px;color:#444">线型</span>
<div class="bx" style="left:1711.5px;top:690.5px;width:74.5px;height:28px;"></div>
<div class="chev" style="left:1774px;top:699px"></div>
<div style="left:1718px;top:703px;width:51px;height:2px;background:#111"></div>
<span class="pl" style="left:1803px;top:697px;color:#444">线宽</span>
<div class="bx" style="left:1839.5px;top:690.5px;width:74.5px;height:28px;"></div>
<div style="left:1845.5px;top:704.0px;width:11px;height:1.4px;background:#333"></div>
<span style="left:1856.5px;top:696.5px;width:40px;text-align:center;font-size:14px;line-height:16px;color:#333">2</span>
<span style="left:1894.5px;top:695.5px;width:14px;text-align:center;font-size:16px;line-height:17px;color:#333">+</span>
<span class="pl" style="left:1675px;top:737px;color:#444">首端</span>
<div class="bx" style="left:1711.5px;top:730.5px;width:74.5px;height:28px;"></div>
<div class="chev" style="left:1774px;top:739px"></div>
<div style="left:1718px;top:743px;width:51px;height:2px;background:#111"></div>
<span class="pl" style="left:1803px;top:737px;color:#444">末端</span>
<div class="bx" style="left:1839.5px;top:730.5px;width:74.5px;height:28px;"></div>
<div class="chev" style="left:1902px;top:739px"></div>
<div style="left:1846px;top:743px;width:51px;height:2px;background:#111"></div>
<div style="left:1683px;top:778.5px;width:12.5px;height:12.5px;border:1px solid #777;border-radius:2px"></div>
<span class="pl" style="left:1701px;top:778px;color:#444">分支编号</span>
</body></html>
